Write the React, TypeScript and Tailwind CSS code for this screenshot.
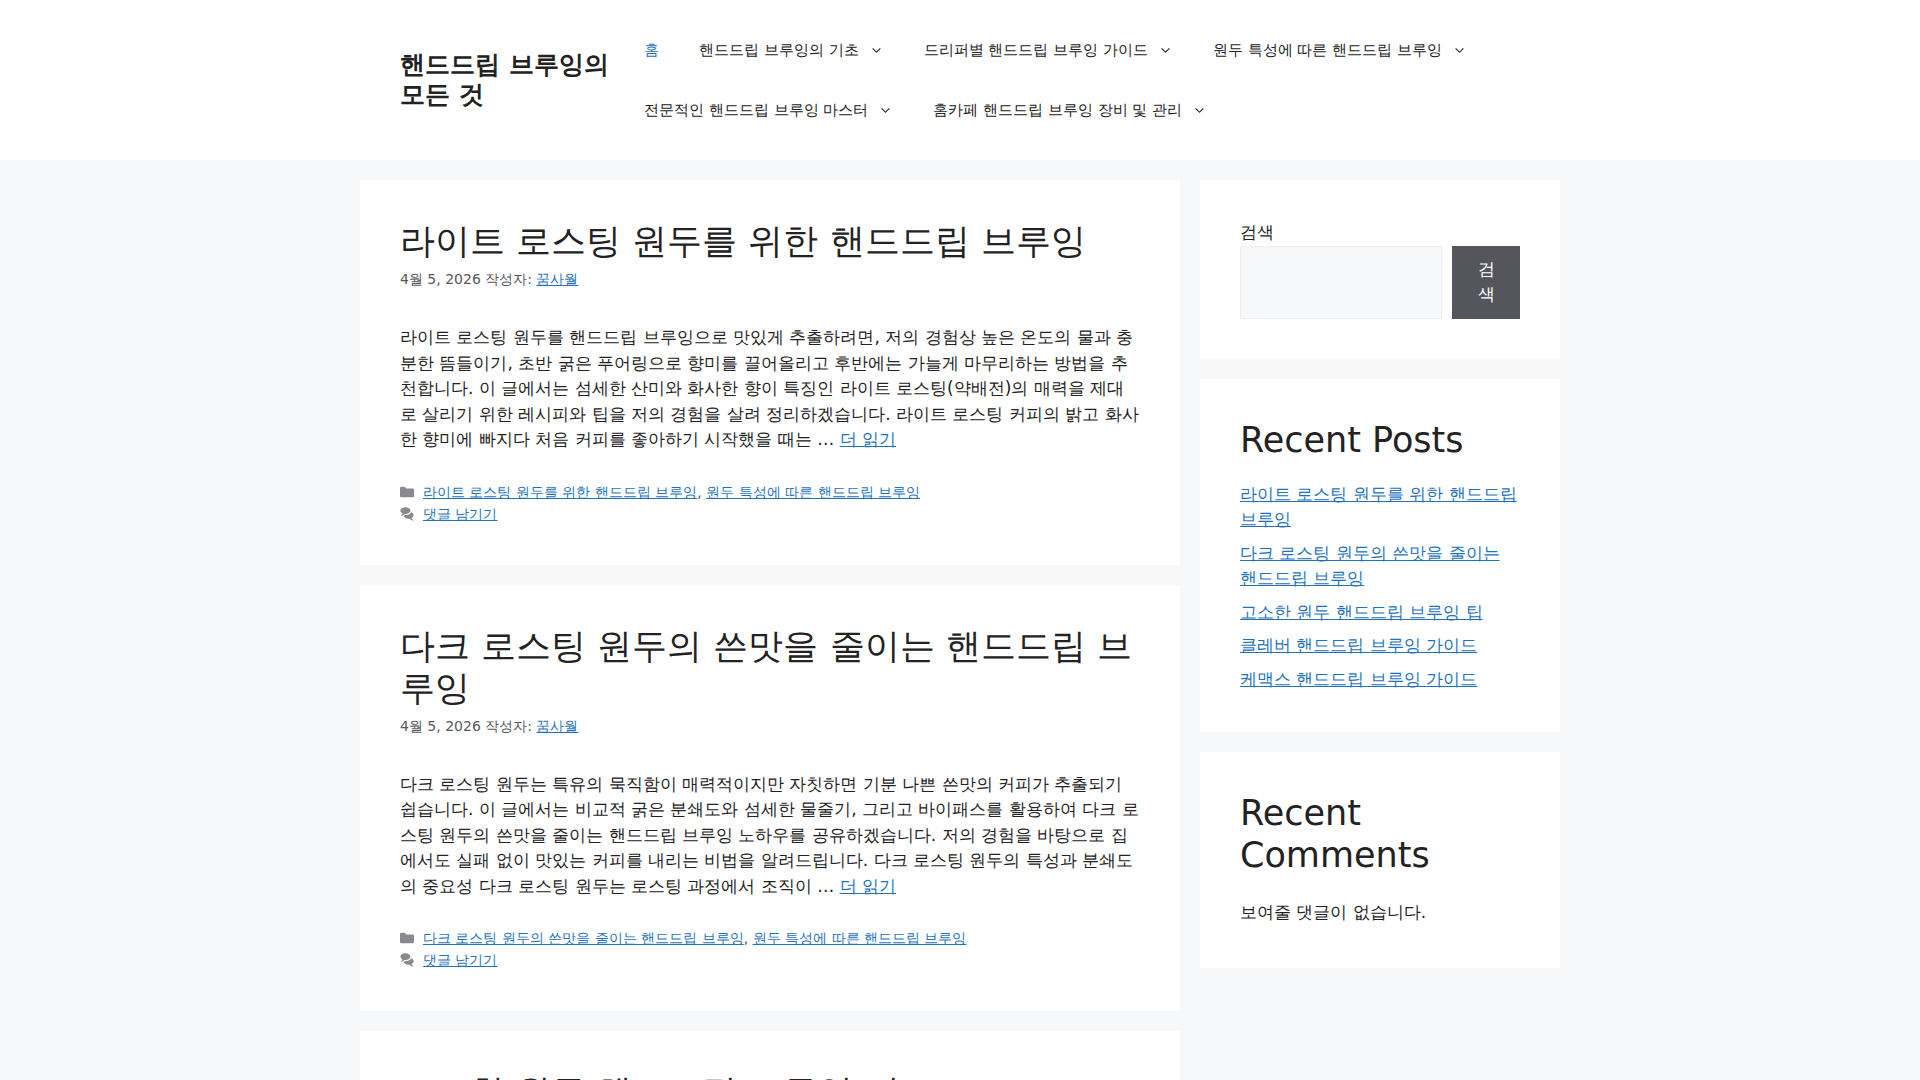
type Post = { title: string; excerpt?: string; categories: string[] };

const menu = [
  "핸드드립 브루잉의 기초",
  "드리퍼별 핸드드립 브루잉 가이드",
  "원두 특성에 따른 핸드드립 브루잉",
  "전문적인 핸드드립 브루잉 마스터",
  "홈카페 핸드드립 브루잉 장비 및 관리",
];

const posts: Post[] = [
  {
    title: "라이트 로스팅 원두를 위한 핸드드립 브루잉",
    excerpt:
      "라이트 로스팅 원두를 핸드드립 브루잉으로 맛있게 추출하려면, 저의 경험상 높은 온도의 물과 충분한 뜸들이기, 초반 굵은 푸어링으로 향미를 끌어올리고 후반에는 가늘게 마무리하는 방법을 추천합니다. 이 글에서는 섬세한 산미와 화사한 향이 특징인 라이트 로스팅(약배전)의 매력을 제대로 살리기 위한 레시피와 팁을 저의 경험을 살려 정리하겠습니다. 라이트 로스팅 커피의 밝고 화사한 향미에 빠지다 처음 커피를 좋아하기 시작했을 때는 …",
    categories: ["라이트 로스팅 원두를 위한 핸드드립 브루잉", "원두 특성에 따른 핸드드립 브루잉"],
  },
  {
    title: "다크 로스팅 원두의 쓴맛을 줄이는 핸드드립 브루잉",
    excerpt:
      "다크 로스팅 원두는 특유의 묵직함이 매력적이지만 자칫하면 기분 나쁜 쓴맛의 커피가 추출되기 쉽습니다. 이 글에서는 비교적 굵은 분쇄도와 섬세한 물줄기, 그리고 바이패스를 활용하여 다크 로스팅 원두의 쓴맛을 줄이는 핸드드립 브루잉 노하우를 공유하겠습니다. 저의 경험을 바탕으로 집에서도 실패 없이 맛있는 커피를 내리는 비법을 알려드립니다. 다크 로스팅 원두의 특성과 분쇄도의 중요성 다크 로스팅 원두는 로스팅 과정에서 조직이 …",
    categories: ["다크 로스팅 원두의 쓴맛을 줄이는 핸드드립 브루잉", "원두 특성에 따른 핸드드립 브루잉"],
  },
  { title: "고소한 원두 핸드드립 브루잉 팁", categories: [] },
];

const recent = [
  "라이트 로스팅 원두를 위한 핸드드립 브루잉",
  "다크 로스팅 원두의 쓴맛을 줄이는 핸드드립 브루잉",
  "고소한 원두 핸드드립 브루잉 팁",
  "클레버 핸드드립 브루잉 가이드",
  "케맥스 핸드드립 브루잉 가이드",
];

const link = "text-[#1e73be] underline";

function Chevron() {
  return (
    <svg viewBox="0 0 330 512" className="size-[15px]" fill="currentColor" aria-hidden="true">
      <path d="M305.913 197.085c0 2.266-1.133 4.815-2.833 6.514L171.087 335.593c-1.7 1.7-4.249 2.832-6.515 2.832s-4.815-1.133-6.515-2.832L26.064 203.599c-1.7-1.7-2.832-4.248-2.832-6.514s1.132-4.816 2.832-6.515l14.162-14.163c1.7-1.699 3.966-2.832 6.515-2.832 2.266 0 4.815 1.133 6.515 2.832l111.316 111.317 111.316-111.317c1.7-1.699 4.249-2.832 6.515-2.832s4.815 1.133 6.515 2.832l14.162 14.163c1.7 1.7 2.833 4.249 2.833 6.515z" />
    </svg>
  );
}

function FolderIcon() {
  return (
    <svg viewBox="0 0 512 512" className="size-3.5 shrink-0 text-[#89898f]" fill="currentColor" aria-hidden="true">
      <path d="M0 112c0-26.51 21.49-48 48-48h110.014a48 48 0 0143.592 27.907l12.349 26.791A16 16 0 00228.486 128H464c26.51 0 48 21.49 48 48v224c0 26.51-21.49 48-48 48H48c-26.51 0-48-21.49-48-48V112z" />
    </svg>
  );
}

function CommentsIcon() {
  return (
    <svg viewBox="0 0 512 512" className="size-3.5 shrink-0 text-[#89898f]" fill="currentColor" aria-hidden="true">
      <path d="M132.838 329.973a435.298 435.298 0 0016.769-9.004c13.363-7.574 26.587-16.142 37.419-25.507 7.544.597 15.27.925 23.098.925 54.905 0 105.634-15.311 143.285-41.28 23.728-16.365 43.115-37.692 54.155-62.645 54.699 22.205 91.498 63.272 91.498 110.286 0 42.186-29.558 79.498-75.09 102.828 23.46 49.216 75.09 101.709 75.09 101.709s-115.837-38.35-154.424-78.46c-9.956 1.12-20.297 1.758-30.793 1.758-88.727 0-162.927-43.071-181.007-100.61z" />
      <path d="M383.371 132.502c0 70.603-82.961 127.787-185.216 127.787-10.496 0-20.837-.639-30.793-1.757-38.587 40.093-154.424 78.429-154.424 78.429s51.63-52.472 75.09-101.67c-45.532-23.321-75.09-60.619-75.09-102.79C12.938 61.9 95.9 4.716 198.155 4.716 300.41 4.715 383.37 61.9 383.37 132.502z" />
    </svg>
  );
}

function Article({ post }: { post: Post }) {
  return (
    <article className="bg-white p-10">
      <h2 className="text-[35px] leading-[42px]">
        <a href="#post">{post.title}</a>
      </h2>
      <p className="mt-1.5 text-sm leading-[22px] text-[#575760]">
        4월 5, 2026 작성자:{" "}
        <a href="#author" className={link}>
          꿈사월
        </a>
      </p>
      {post.excerpt && (
        <p className="mt-[35px]">
          {post.excerpt}{" "}
          <a href="#more" className={link}>
            더 읽기
          </a>
        </p>
      )}
      {post.categories.length > 0 && (
        <footer className="mt-7 text-sm leading-[22px] text-[#575760]">
          <div className="flex items-center gap-[9px]">
            <FolderIcon />
            <span>
              {post.categories.map((name, i) => (
                <span key={name}>
                  {i > 0 && ", "}
                  <a href="#category" className={link}>
                    {name}
                  </a>
                </span>
              ))}
            </span>
          </div>
          <div className="flex items-center gap-[9px]">
            <CommentsIcon />
            <a href="#comments" className={link}>
              댓글 남기기
            </a>
          </div>
        </footer>
      )}
    </article>
  );
}

export default function App() {
  return (
    <div className="min-h-screen bg-[#f7f8f9] font-['DejaVu_Sans',sans-serif] text-[17px] leading-normal text-[#222222]">
      <header className="bg-white">
        <div className="mx-auto flex max-w-[1200px] flex-wrap items-center px-10 py-5 lg:flex-nowrap">
          <p className="w-56 shrink-0 text-[25px] leading-[30px] font-bold">
            <a href="#home">핸드드립 브루잉의 모든 것</a>
          </p>
          <nav className="grow">
            <ul className="flex flex-wrap text-[15px] leading-[60px]">
              <li>
                <a href="#home" className="block px-5 text-[#1e73be]">
                  홈
                </a>
              </li>
              {menu.map((item) => (
                <li key={item}>
                  <a href="#menu" className="flex items-center gap-2.5 px-5">
                    {item}
                    <Chevron />
                  </a>
                </li>
              ))}
            </ul>
          </nav>
        </div>
      </header>

      <div className="mx-auto flex max-w-[1200px] flex-col gap-5 py-5 lg:flex-row lg:items-start">
        <main className="flex min-w-0 flex-1 flex-col gap-5">
          {posts.map((post) => (
            <Article key={post.title} post={post} />
          ))}
        </main>

        <aside className="flex flex-col gap-5 lg:w-[360px]">
          <section className="bg-white p-10">
            <form onSubmit={(e) => e.preventDefault()}>
              <label htmlFor="search" className="block">
                검색
              </label>
              <div className="flex gap-2.5">
                <input
                  id="search"
                  type="search"
                  className="min-w-0 flex-1 border border-[#eeeeee] bg-[#f7f8f9] px-2"
                />
                <button type="submit" className="w-[68px] border border-[#55555e] bg-[#55555e] px-5 py-2.5 text-white">
                  검색
                </button>
              </div>
            </form>
          </section>

          <section className="bg-white p-10">
            <h2 className="mb-[21px] text-[35px] leading-[42px]">Recent Posts</h2>
            <ul className="flex flex-col gap-2">
              {recent.map((title) => (
                <li key={title}>
                  <a href="#post" className={link}>
                    {title}
                  </a>
                </li>
              ))}
            </ul>
          </section>

          <section className="bg-white p-10">
            <h2 className="mb-[21px] text-[35px] leading-[42px]">Recent Comments</h2>
            <p className="leading-[31px]">보여줄 댓글이 없습니다.</p>
          </section>
        </aside>
      </div>
    </div>
  );
}
